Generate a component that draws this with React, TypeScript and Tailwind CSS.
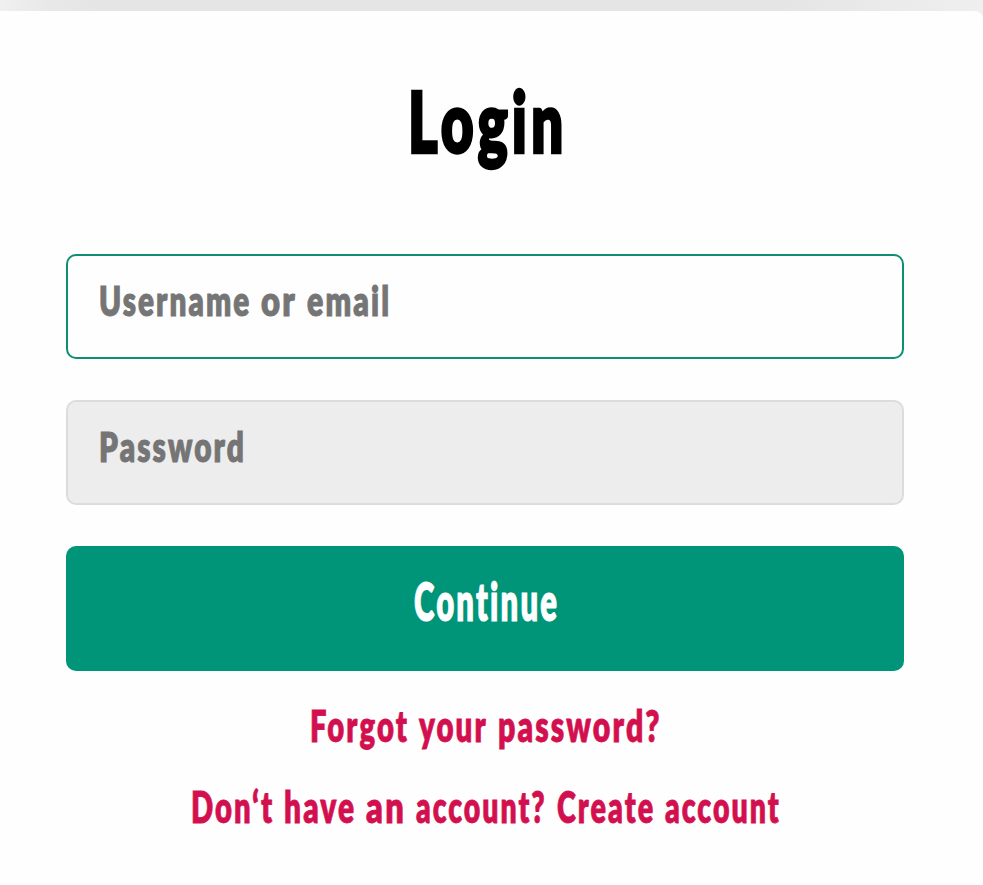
import { useLayoutEffect, useRef, useState } from "react";

type WordSpec = { text: string; width: number };

/* A word condensed horizontally so that it fills the given width. */
function Word({ text, width }: WordSpec) {
  const ref = useRef<HTMLSpanElement>(null);
  const [scale, setScale] = useState(1);
  useLayoutEffect(() => {
    if (ref.current) setScale(width / ref.current.offsetWidth);
  }, [text, width]);
  return (
    <span className="block shrink-0" style={{ width }}>
      <span
        ref={ref}
        className="inline-block origin-left whitespace-nowrap"
        style={{ transform: `scaleX(${scale})` }}
      >
        {text}
      </span>
    </span>
  );
}

function Line({ words, className }: { words: WordSpec[]; className: string }) {
  return (
    <span className={`flex gap-[10px] tracking-[0.07em] ${className}`}>
      {words.map((w, i) => (
        <Word key={i} {...w} />
      ))}
    </span>
  );
}

export default function App() {
  return (
    <div className="h-[885px] w-[983px] overflow-hidden bg-[linear-gradient(90deg,#f0f0f0_0px,#e8e8e8_50px,#e5e5e5_100px,#e5e5e5_780px,#efefef_983px)] pt-[11px] font-['Lato','Open_Sans',sans-serif] font-extrabold">
      <main className="flex h-[874px] flex-col rounded-tr-[8px] bg-[#fefefe] pr-[79px] pl-[66px]">
        <h1 className="mt-[59px] flex h-[100px] justify-center pl-[4px] text-black">
          <Line
            className="text-[86px] leading-[100px] [-webkit-text-stroke:2.5px_currentColor]"
            words={[{ text: "Login", width: 159 }]}
          />
        </h1>

        <form className="mt-[84px] flex flex-col" onSubmit={(e) => e.preventDefault()}>
          <div className="h-[105px] rounded-[10px] border-2 border-[#0c8f72] bg-[#fefefe] pt-[19px] pl-[31px] text-[#757575]">
            <Line
              className="text-[41px] leading-[52px] [-webkit-text-stroke:1px_currentColor]"
              words={[
                { text: "Username", width: 152 },
                { text: "or", width: 36 },
                { text: "email", width: 84 },
              ]}
            />
          </div>
          <div className="mt-[41px] h-[105px] rounded-[10px] border-2 border-[#dcdcdc] bg-[#ededed] pt-[19px] pl-[31px] text-[#757575]">
            <Line
              className="text-[41px] leading-[52px] [-webkit-text-stroke:1px_currentColor]"
              words={[{ text: "Password", width: 147 }]}
            />
          </div>
          <button
            type="submit"
            className="mt-[41px] flex h-[125px] justify-center rounded-[10px] bg-[#009578] pt-[22px] pl-[3px] text-white"
          >
            <Line
              className="text-[52px] leading-[66px] [-webkit-text-stroke:1px_currentColor]"
              words={[{ text: "Continue", width: 145 }]}
            />
          </button>
        </form>

        <a href="#" className="mt-[26px] flex justify-center pl-[1px] text-[#d3104f]">
          <Line
            className="text-[44px] leading-[56px] [-webkit-text-stroke:0.8px_currentColor]"
            words={[
              { text: "Forgot", width: 99 },
              { text: "your", width: 69 },
              { text: "password?", width: 164 },
            ]}
          />
        </a>
        <a href="#" className="mt-[25px] flex justify-center pl-[1px] text-[#d3104f]">
          <Line
            className="text-[44px] leading-[56px] [-webkit-text-stroke:0.8px_currentColor]"
            words={[
              { text: "Don‘t", width: 83 },
              { text: "have", width: 72 },
              { text: "an", width: 40 },
              { text: "account?", width: 131 },
              { text: "Create", width: 98 },
              { text: "account", width: 116 },
            ]}
          />
        </a>
      </main>
    </div>
  );
}
